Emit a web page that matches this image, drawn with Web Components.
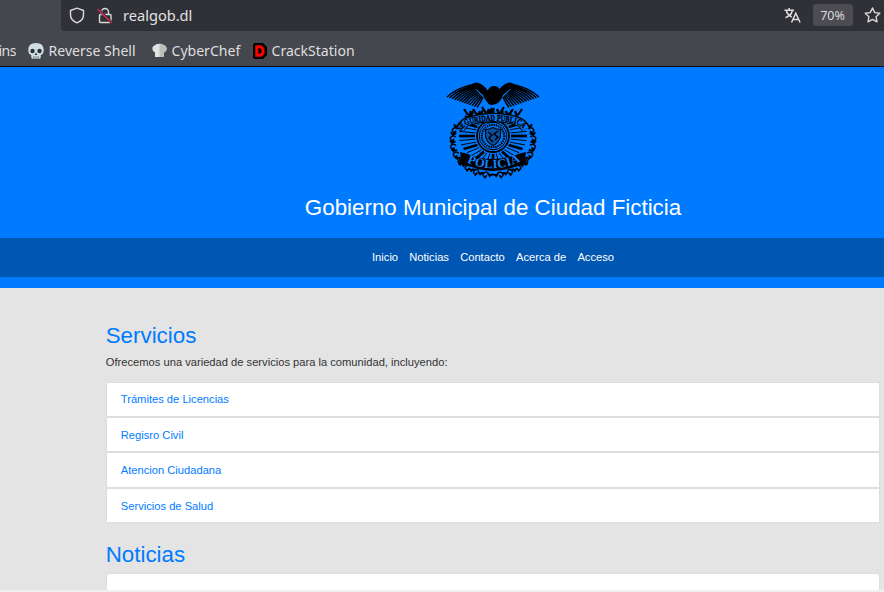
<!DOCTYPE html>
<html lang="es"><head><meta charset="utf-8"><title>Gobierno Municipal</title>
<style>
html,body{margin:0;padding:0;height:592px;overflow:hidden;background:#e4e4e4;font-family:"Liberation Sans",Arial,sans-serif}
</style></head><body>
<gob-app></gob-app>
<script>
const define=(name,html,init)=>customElements.define(name,class extends HTMLElement{
  connectedCallback(){if(this.shadowRoot)return;const r=this.attachShadow({mode:'open'});const t=document.createElement('template');t.innerHTML=html;r.append(t.content.cloneNode(true));if(init)init(this,r);}
});
define('url-bar',`<style>
:host{display:flex;height:31px;margin-left:61px;background:#303136;border-radius:0 0 0 4px;align-items:center;color:#fbfbfe;font:14.600px/20px "Noto Sans",sans-serif}
svg{display:block;flex:none}.s{margin-left:8px}.l{margin-left:12px}.u{margin-left:9px;flex:1;color:#e0e0e2;white-space:nowrap;padding-bottom:1px}
.z{width:40px;height:22px;margin:0 11px 1px 12px;border-radius:3px;background:#4c4c52;font-size:12.500px;line-height:23px;text-align:center;color:#d8d8db;text-indent:-1px}
.f{margin-right:3px}
</style>
<svg class="s" width="16" height="18" viewBox="0 0 16 18"><path d="M8 1.200 14.500 3.500v4.200c0 3.600-2.800 6.700-6.500 8.100-3.700-1.400-6.500-4.500-6.500-8.100V3.500z" fill="none" stroke="#d9d9dc" stroke-width="1.400" stroke-linejoin="round"/></svg>
<svg class="l" width="17" height="18" viewBox="0 0 17 18"><path d="M4.500 7.500V5a3.500 3.500 0 0 1 7 0v2.500M3.500 7.500h9.500a1 1 0 0 1 1 1v6a1 1 0 0 1-1 1H3.500a1 1 0 0 1-1-1v-6a1 1 0 0 1 1-1z" fill="none" stroke="#d9d9dc" stroke-width="1.400"/><path d="M1.500 2.500 15 16" stroke="#303136" stroke-width="2.600"/><path d="M.8 2.200 14.500 15.800" stroke="#e22850" stroke-width="1.400"/></svg>
<span class="u">realgob.dl</span>
<svg class="t" width="17" height="18" viewBox="0 0 17 18"><path d="M.5 3.300h9.500M5.200 1v2.300M2.300 4c1 3 3.400 5 5.400 6M8.300 4c-.8 3.200-3.500 5.400-6.800 6.700M7.500 15.500 11.800 6.200 16.100 15.500M9 12.500h5.600" fill="none" stroke="#dedee0" stroke-width="1.500"/></svg>
<span class="z">70%</span>
<svg class="f" width="17" height="17" viewBox="0 0 17 17"><path d="m8.500 1 2.300 4.600 5 .7-3.700 3.500.9 5-4.500-2.400L4 14.800l.9-5-3.700-3.500 5-.7z" fill="none" stroke="#d9d9dc" stroke-width="1.400" stroke-linejoin="round"/></svg>`);
define('book-mark',`<style>:host{display:flex;align-items:center;gap:4.500px;white-space:nowrap}</style><slot name="icon"></slot><span><slot></slot></span>`);
define('browser-chrome',`<style>
:host{display:block;height:66px;background:#45474e;border-bottom:1px solid #0c0c0d}
nav{display:flex;height:35px;padding-top:4px;box-sizing:border-box;align-items:center;color:#dededf;font:14.050px/20px "Noto Sans",sans-serif}
.cut{width:16px;display:flex;justify-content:flex-end;overflow:hidden;margin-right:12px;letter-spacing:-.5px}svg{display:block}
.b{width:124px}.c{width:101px}
</style><url-bar></url-bar><nav><span class="cut">ins</span>
<book-mark class="b"><svg slot="icon" width="16" height="16" viewBox="0 0 16 16"><path d="M8 0C3 0 .3 2.800.3 6.500c0 2 .3 3 .8 4 .5.9 1.600 1.300 2.200 1.600V15l1 .8h7.400l1-.8v-2.900c.8-.3 1.800-.7 2.200-1.600.5-1 .8-2 .8-4C15.700 2.800 13 0 8 0" fill="#d0dce3"/><circle cx="4.500" cy="8" r="2.200" fill="#2b3036"/><circle cx="11.500" cy="8" r="2.200" fill="#2b3036"/><path d="m8 9.500 1.300 2.500H6.700z" fill="#2b3036"/><path d="M5.800 13v3M8 13v3M10.200 13v3" stroke="#60676d" stroke-width=".8"/></svg>Reverse Shell</book-mark>
<book-mark class="c"><svg slot="icon" width="15" height="15" viewBox="0 0 15 15"><path d="M3 14V9.500C-.5 8-.5 3 3 2.200 4.500.5 6 1.200 7.500.7 9 .5 10.500 1 12 2.200c3.500 1 3.500 6 0 7.300V14z" fill="#e2e2e2"/><path d="M7.500.7C9 .5 10.500 1 12 2.200c3.500 1 3.500 6 0 7.300V14H7.500z" fill="#bebebe"/></svg>CyberChef</book-mark>
<book-mark><svg slot="icon" width="14" height="16" viewBox="0 0 14 16"><path d="M0 1.500 1.500 0H10l4 4v8l-4 4H1.500L0 14.500z" fill="#000"/><path d="M3.800 3.800h4l2.200 2v4.400l-2.200 2h-4z" fill="none" stroke="#f00" stroke-width="3"/></svg>CrackStation</book-mark></nav>`);
define('police-crest',`<style>:host{display:block;width:94px;height:98px}svg{display:block;overflow:visible}text{font-family:"Liberation Serif",serif;font-weight:bold}</style>
<svg width="94" height="98" viewBox="0 0 94 98"><g id="wings"></g><path d="M41 20Q40 12 42 9q2-4 6-4 5 0 6 5l-1 1 1 1q3 5-1 9-3 3-7 3-4 0-5-4z"/>
<g fill="none" stroke="#000"><g id="rays"></g><g id="leaves"></g><circle cx="47" cy="55" r="16" fill="#007bff" stroke-width="1.800"/><circle cx="47" cy="55" r="13.800" stroke-width="1"/><circle cx="47" cy="55" r="11.200" stroke-width="2.200" stroke-dasharray="1.500 .8"/></g>
<path d="M39.500 48.500q4 0 7.500-2 3.500 2 7.500 2v7q-1 6-7.500 9-6.500-3-7.500-9z" fill="#0a4fa0" stroke="#000" stroke-width="1.200"/><path d="m42 51 4 3-3 3 4 4M52 50l-4 3 4 3-3 3" stroke="#000" stroke-width="1.500" fill="none"/>
<path d="M14 48q3-6 9-8 24-7 48 0 6 2 9 8" fill="none" stroke="#000" stroke-width="9.500"/><path d="M14.500 48q3-6 9-8 23.500-7 47 0 6 2 9 8" fill="none" stroke="#007bff" stroke-width="7"/><path id="tp" d="M14 51.500q4-6.500 9-8.500 24-6.500 48 0 5 2 9 8.500" fill="none"/>
<text font-size="8.500" textLength="68" lengthAdjust="spacingAndGlyphs" stroke="#000" stroke-width=".4"><textPath href="#tp" startOffset="1">SEGURIDAD PUBLICA</textPath></text>
<path d="M14 71l8 2q11 5 25 5t25-5l8-2-1 6 3 7-8-1Q63 90 47 90t-27-7l-8 1 3-7z"/><path id="bp" d="M18 80q29 15 59-1" fill="none"/><text font-size="12.500" fill="#1684ff" textLength="56" lengthAdjust="spacing"><textPath href="#bp" startOffset="3">POLICIA</textPath></text></svg>`,(_,r)=>{
 let w='';
 for(const s of[-1,1])for(let i=0;i<13;i++){
  const k=i/12,x=47+s*(46-k*30),y=16+k*10.500,sx=47+s*(22-k*12),sy=4+k*12;
  w+=`<path d="M${sx} ${sy}Q${sx+s*(14-k*12)} ${sy+3+k*2} ${x} ${y}" stroke="#000" stroke-width="1.500" fill="none"/>`;
 }
 r.querySelector('#wings').innerHTML=w+'<path d="M12 11Q20 6 26 3q4-3 9 0 6 4 8 9v10q-4-2-6-8l-7-6-7 1zM82 11Q74 6 68 3q-4-3-9 0-6 4-8 9v10q4-2 6-8l7-6 7 1z"/>';
 let a='';for(let i=0;i<36;i++){const t=i/36*Math.PI*2,c=Math.cos(t),s=Math.sin(t);a+=`<path d="M${47+c*18} ${55+s*18}L${47+c*34} ${55+s*26}" stroke-width="${i%3?1:2.800}"/>`}r.querySelector('#rays').innerHTML=a;
 let l='';
 for(const s of[-1,1])for(let i=0;i<17;i++){
  const t=-.45+i*.122,x=47+s*Math.cos(t)*40.5,y=61+Math.sin(t)*34,d=i%2?1:-1;
  l+=`<path d="M${x-s*3} ${y-2}q${s*3} ${-3*d} ${s*5.5} ${d}q${-s} 4 ${-s*4} 1l${s*2.500} 3" stroke-width="1.500"/>`;
 }
 for(const x of[22,31,40,54,63,72]){const d=x<47?1:-1,y=x>36&&x<58?36:38;l+=`<path d="M${x} ${y}l${d*3}-8m${-d*7}-2 ${d*4} 6m${d*6}-5-3 6m-6 0 5 3" stroke-width="2.200"/>`}
 r.querySelector('#leaves').innerHTML=l;});
define('site-header',`<style>
:host{display:flex;flex-direction:column;align-items:center;box-sizing:border-box;height:221px;padding-top:14px;background:#007bff;color:#fff}
police-crest,h1{margin-left:102px}
h1{font-size:22.350px;line-height:27px;font-weight:400;margin-top:15px;margin-bottom:17px;white-space:nowrap}
nav{align-self:stretch;height:39px;background:#0056b3;display:flex;justify-content:center;align-items:center;padding-left:102px;gap:11.200px;font-size:11.170px;line-height:17px}
a{white-space:nowrap}</style><police-crest></police-crest><h1>Gobierno Municipal de Ciudad Ficticia</h1><nav><a>Inicio</a><a>Noticias</a><a>Contacto</a><a>Acerca de</a><a>Acceso</a></nav>`);
define('list-item',`<style>:host{display:flex;align-items:center;box-sizing:border-box;height:var(--h,35px);border:1px solid #dedede;background:#fff;padding-left:13.800px;padding-bottom:var(--lift,0);font-size:11.170px;color:#007bff}</style><slot></slot>`);
define('site-main',`<style>
:host{display:block;padding:34px 4px 0 106px}h2{font-size:22.350px;line-height:27px;font-weight:400;color:#007bff;margin:0;text-indent:-.3px}
p{margin:5px 0 11px;font-size:11.170px;line-height:17px;color:#333;text-indent:-.2px}.n{margin-top:18px;margin-bottom:5px}
</style><h2>Servicios</h2><p>Ofrecemos una variedad de servicios para la comunidad, incluyendo:</p>
<list-item style="--lift:2px">Trámites de Licencias</list-item><list-item>Regisro Civil</list-item><list-item style="--h:36px">Atencion Ciudadana</list-item><list-item>Servicios de Salud</list-item><h2 class="n">Noticias</h2><list-item style="border-radius:3px 3px 0 0"></list-item>`);
define('gob-app',`<style>:host{display:flex;flex-direction:column;height:592px;box-sizing:border-box;border-bottom:2px solid #f0f0f0;overflow:hidden}browser-chrome,site-header{flex:none}site-main{flex:1;min-height:0;overflow:hidden}</style><browser-chrome></browser-chrome><site-header></site-header><site-main></site-main>`);
</script></body></html>
